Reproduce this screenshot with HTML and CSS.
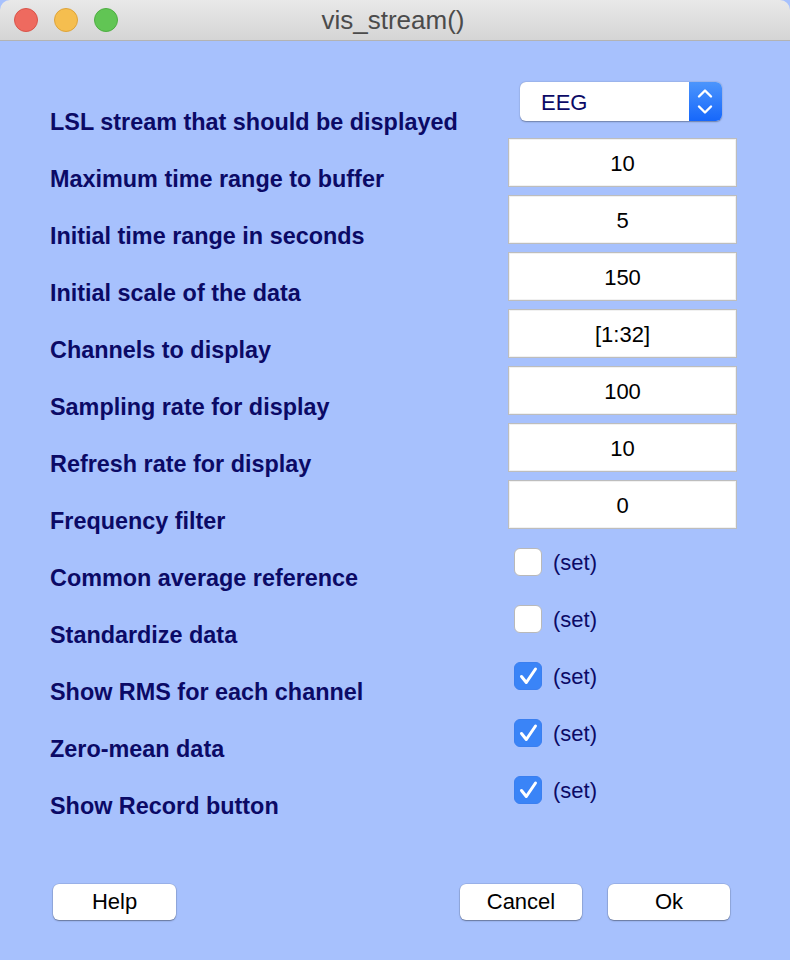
FILE: index.html
```html
<!DOCTYPE html>
<html>
<head>
<meta charset="utf-8">
<link rel="stylesheet" href="styles.css">
</head>
<body>
<div class="window">
  <header class="titlebar">
    <div class="lights">
      <span class="light red"></span>
      <span class="light yellow"></span>
      <span class="light green"></span>
    </div>
    <div class="title">vis_stream()</div>
    <div></div>
  </header>
  <main class="form">
    <div class="lbl">LSL stream that should be displayed</div>
    <div class="ctl ctl-select">
      <div class="select">
        <span class="select-value">EEG</span>
        <span class="select-arrow">
          <svg width="33" height="39" viewBox="0 0 33 39"><path d="M10 14.5 L16 8.5 L22 14.5" fill="none" stroke="#fff" stroke-width="2.4" stroke-linecap="round" stroke-linejoin="round"/><path d="M10 24.5 L16 30.5 L22 24.5" fill="none" stroke="#fff" stroke-width="2.4" stroke-linecap="round" stroke-linejoin="round"/></svg>
        </span>
      </div>
    </div>

    <div class="lbl">Maximum time range to buffer</div>
    <div class="ctl"><div class="field">10</div></div>

    <div class="lbl">Initial time range in seconds</div>
    <div class="ctl"><div class="field">5</div></div>

    <div class="lbl">Initial scale of the data</div>
    <div class="ctl"><div class="field">150</div></div>

    <div class="lbl">Channels to display</div>
    <div class="ctl"><div class="field">[1:32]</div></div>

    <div class="lbl">Sampling rate for display</div>
    <div class="ctl"><div class="field">100</div></div>

    <div class="lbl">Refresh rate for display</div>
    <div class="ctl"><div class="field">10</div></div>

    <div class="lbl">Frequency filter</div>
    <div class="ctl"><div class="field">0</div></div>

    <div class="lbl">Common average reference</div>
    <div class="ctl ctl-check"><span class="box"></span><span class="set">(set)</span></div>

    <div class="lbl">Standardize data</div>
    <div class="ctl ctl-check"><span class="box"></span><span class="set">(set)</span></div>

    <div class="lbl">Show RMS for each channel</div>
    <div class="ctl ctl-check"><span class="box checked"><svg width="28" height="28" viewBox="0 0 28 28"><path d="M7.5 14.5 L12.3 20.5 L21.5 7" fill="none" stroke="#fff" stroke-width="3" stroke-linecap="round" stroke-linejoin="round"/></svg></span><span class="set">(set)</span></div>

    <div class="lbl">Zero-mean data</div>
    <div class="ctl ctl-check"><span class="box checked"><svg width="28" height="28" viewBox="0 0 28 28"><path d="M7.5 14.5 L12.3 20.5 L21.5 7" fill="none" stroke="#fff" stroke-width="3" stroke-linecap="round" stroke-linejoin="round"/></svg></span><span class="set">(set)</span></div>

    <div class="lbl">Show Record button</div>
    <div class="ctl ctl-check"><span class="box checked"><svg width="28" height="28" viewBox="0 0 28 28"><path d="M7.5 14.5 L12.3 20.5 L21.5 7" fill="none" stroke="#fff" stroke-width="3" stroke-linecap="round" stroke-linejoin="round"/></svg></span><span class="set">(set)</span></div>
  </main>
  <footer class="buttons">
    <button class="btn btn-help">Help</button>
    <div class="btn-group">
      <button class="btn">Cancel</button>
      <button class="btn">Ok</button>
    </div>
  </footer>
</div>
</body>
</html>
```

FILE: styles.css
```css
html, body {
  margin: 0;
  padding: 0;
}
body {
  width: 790px;
  height: 960px;
  overflow: hidden;
  background: #a7c1fd;
  font-family: "Liberation Sans", Arial, sans-serif;
}
.window {
  width: 790px;
  height: 960px;
  background: #a7c1fd;
}
.titlebar {
  height: 40px;
  display: grid;
  grid-template-columns: 1fr auto 1fr;
  align-items: center;
  background: linear-gradient(#e9e9e9, #d5d5d5);
  border-bottom: 1px solid #b3b3b3;
  border-radius: 10px 10px 0 0;
}
.lights {
  display: flex;
  gap: 16px;
  padding-left: 14px;
}
.light {
  width: 24px;
  height: 24px;
  border-radius: 50%;
  box-sizing: border-box;
}
.red { background: #ee6a5f; border: 1px solid #d9544a; }
.yellow { background: #f5be4f; border: 1px solid #dea43a; }
.green { background: #61c554; border: 1px solid #4eae42; }
.title {
  font-size: 26px;
  color: #4b4b4b;
  padding-right: 4px;
}
.form {
  display: grid;
  grid-template-columns: 458px 229px;
  grid-auto-rows: 57px;
  padding: 40px 0 0 50px;
}
.lbl {
  font-size: 23.4px;
  font-weight: bold;
  line-height: 26px;
  padding-top: 28px;
  color: #0b0a66;
  white-space: nowrap;
}
.ctl {
  display: flex;
  align-items: flex-start;
}
.field {
  width: 229px;
  height: 49px;
  box-sizing: border-box;
  background: #fff;
  border: 1px solid #bdbdbd;
  box-shadow: inset 0 0 0 1px #f1f1f1;
  display: flex;
  align-items: center;
  justify-content: center;
  padding-top: 2px;
  font-size: 22px;
  color: #000;
}
.ctl-select {
  padding-left: 12px;
}
.select {
  width: 202px;
  height: 39px;
  margin-top: 1px;
  display: flex;
  background: #fff;
  border-radius: 6px;
  box-shadow: 0 0.5px 1.5px rgba(0,0,0,0.35);
  overflow: hidden;
}
.select-value {
  flex: 1;
  padding-left: 21px;
  padding-top: 3px;
  display: flex;
  align-items: center;
  font-size: 22px;
  color: #0b0a66;
}
.select-arrow {
  width: 33px;
  display: flex;
  background: linear-gradient(#4c95fc, #1667fb);
}
.ctl-check {
  padding-top: 11px;
  padding-left: 6px;
  align-items: center;
  gap: 11px;
  height: 28px;
}
.box {
  width: 28px;
  height: 28px;
  box-sizing: border-box;
  border-radius: 6px;
  background: #fff;
  border: 1px solid #b9b9b9;
  display: flex;
}
.box.checked {
  background: #3a84f7;
  border: 1px solid #3a7ff0;
}
.box.checked svg {
  margin: -1px;
}
.set {
  font-size: 22px;
  color: #0b0a66;
  padding-top: 2px;
}
.buttons {
  display: flex;
  justify-content: space-between;
  margin-top: 62px;
  padding: 0 60px 0 53px;
}
.btn-group {
  display: flex;
  gap: 26px;
}
.btn {
  width: 122px;
  height: 36px;
  border: none;
  border-radius: 6px;
  background: #fff;
  box-shadow: 0 0 0 0.5px rgba(0,0,0,0.15), 0 1px 1.5px rgba(0,0,0,0.35);
  font-family: "Liberation Sans", Arial, sans-serif;
  font-size: 22px;
  color: #000;
  padding: 0;
}
.btn-help {
  width: 123px;
}
```
